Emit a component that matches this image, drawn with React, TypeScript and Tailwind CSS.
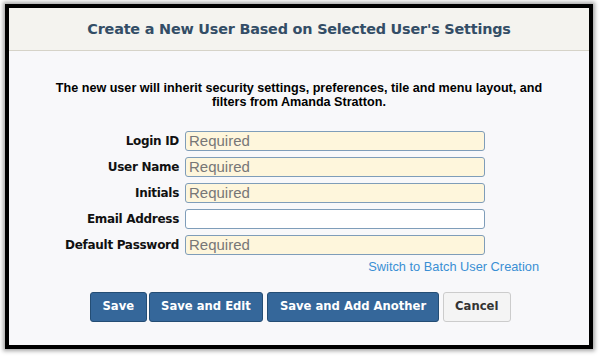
import React from 'react';

type Field = {
	label: string;
	required: boolean;
};

const fields: Field[] = [
	{ label: 'Login ID', required: true },
	{ label: 'User Name', required: true },
	{ label: 'Initials', required: true },
	{ label: 'Email Address', required: false },
	{ label: 'Default Password', required: true },
];

const verdana = { fontFamily: 'Verdana, "DejaVu Sans", sans-serif' };

export default function App() {
	return (
		<div className="w-[600px] h-[357px] bg-white pt-[4px] pl-[5px]">
			<div className="w-[588px] h-[345px] border-[4px] border-black bg-[#f8f8f8] shadow-[0_0_4px_2px_rgba(0,0,0,0.35)] flex flex-col">
				<div className="h-[43px] bg-[#f4f3ef] border-b border-[#d6d3c8] flex items-center justify-center">
					<h1 className="text-[14.4px] font-bold text-[#334d66] tracking-[-0.2px] mt-[2px]" style={verdana}>
						Create a New User Based on Selected User's Settings
					</h1>
				</div>

				<div className="flex-1 bg-[#f8f8fa] flex flex-col items-center pt-[30px]" style={{ fontFamily: '"Liberation Sans", Arial, sans-serif' }}>
					<p className="text-[12.6px] font-bold text-black text-center leading-[14px] w-[520px]">
						The new user will inherit security settings, preferences, tile and menu layout, and filters from Amanda Stratton.
					</p>

					<div className="mt-[22px] flex flex-col gap-[6px] w-full">
						{fields.map((field) => (
							<div key={field.label} className="flex items-center">
								<label className="w-[176px] pr-[6px] text-right text-[12px] font-bold text-[#111] tracking-[-0.3px]" style={verdana}>
									{field.label}
								</label>
								<input
									type="text"
									placeholder={field.required ? 'Required' : ''}
									className={`w-[300px] h-[20px] rounded-[3px] border border-[#7f9db9] px-[3px] text-[15px] placeholder:text-[#777] outline-none ${field.required ? 'bg-[#fef6dc]' : 'bg-white'}`}
								/>
							</div>
						))}
					</div>

					<div className="w-full flex justify-end pr-[50px] mt-[4px]">
						<a href="#" className="text-[12.8px] text-[#3a8fd4] leading-[16px]">
							Switch to Batch User Creation
						</a>
					</div>

					<div className="mt-[17px] flex gap-[2px] items-center w-full pl-[81px]" style={verdana}>
						<button className="h-[30px] px-[11.5px] rounded-[3px] bg-[#35679a] border border-[#244d74] text-white text-[11.6px] font-bold">Save</button>
						<button className="h-[30px] px-[11.5px] rounded-[3px] bg-[#35679a] border border-[#244d74] text-white text-[11.6px] font-bold">Save and Edit</button>
						<button className="ml-[2px] h-[30px] px-[11.5px] rounded-[3px] bg-[#35679a] border border-[#244d74] text-white text-[11.6px] font-bold">Save and Add Another</button>
						<button className="ml-[2px] h-[30px] px-[11.5px] rounded-[3px] bg-[#f4f4f4] border border-[#cccccc] text-[#333] text-[11.6px] font-bold">Cancel</button>
					</div>
				</div>
			</div>
		</div>
	);
}
